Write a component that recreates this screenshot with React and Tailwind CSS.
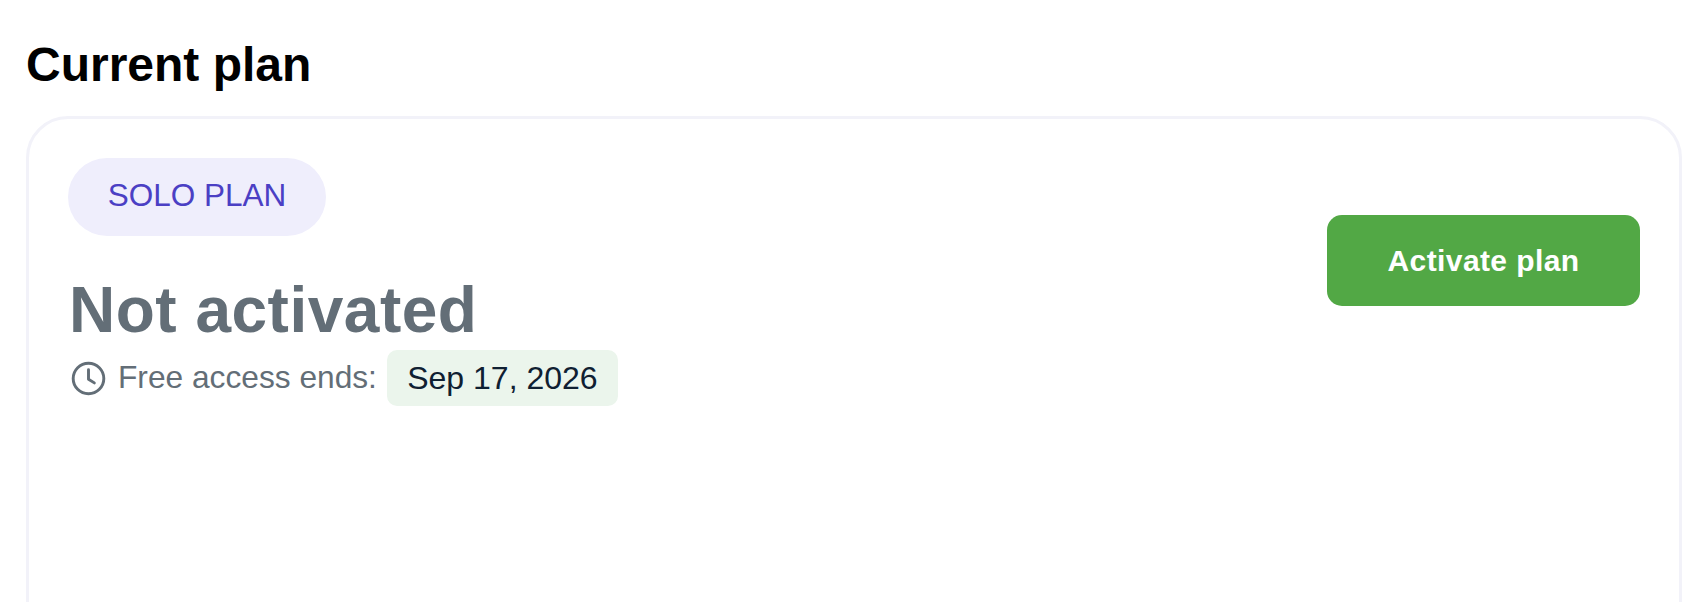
import React from "react";

export default function App() {
  return (
    <div className="h-[602px] overflow-hidden bg-white pl-[26px] pr-[6px] pt-[36px] font-['Liberation_Sans',Arial,sans-serif]">
      <h1 className="text-[48px] font-bold leading-[58px] text-black">Current plan</h1>
      <div className="mt-[22px] flex h-[600px] items-start justify-between rounded-[42px] border-[3px] border-[#f2f2f9] bg-white pl-[39px] pr-[39px] pt-[39px]">
        <div className="flex flex-col items-start">
          <span className="flex h-[78px] w-[258px] items-center justify-center rounded-full bg-[#efeefc] pb-[2px] text-[31.5px] text-[#4b3fc4]">SOLO PLAN</span>
          <h2 className="ml-[1px] mt-[38px] text-[64px] font-bold leading-[72px] tracking-[0.5px] text-[#636e77]">Not activated</h2>
          <div className="mt-[4px] flex items-center">
            <svg className="ml-[3px] h-[35px] w-[35px] text-[#636e77]" viewBox="0 0 24 24" fill="none" stroke="currentColor" strokeWidth="2" strokeLinecap="round" strokeLinejoin="round">
              <circle cx="12" cy="12" r="10.5" />
              <path d="M12 6v6.5l4 2.5" />
            </svg>
            <span className="ml-[12px] text-[31.7px] text-[#636e77]">Free access ends:</span>
            <span className="ml-[10px] flex h-[56px] w-[231px] items-center justify-center rounded-[10px] bg-[#ebf5ec] text-[32px] text-[#0f2032]">Sep 17, 2026</span>
          </div>
        </div>
        <button className="mt-[57px] h-[91px] w-[313px] rounded-[15px] bg-[#52a845] text-[30px] font-bold tracking-[0.4px] text-white">Activate plan</button>
      </div>
    </div>
  );
}
